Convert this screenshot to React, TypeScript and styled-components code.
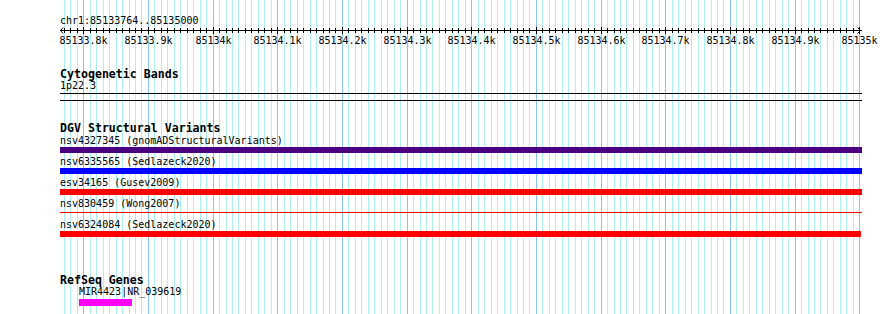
import React from 'react';
import styled, { createGlobalStyle } from 'styled-components';

const START = 85133764;
const END = 85135000;
const LEFT = 60;
const PX_PER_BP = 0.64667;
const TRACK_WIDTH = 802;

const bpToX = (bp: number) => Math.round(LEFT + (bp - START) * PX_PER_BP);

const MONO = `'DejaVu Sans Mono', 'Liberation Mono', monospace`;

const GlobalStyle = createGlobalStyle`
  html, body {
    margin: 0;
    padding: 0;
    background: #ffffff;
  }
  body {
    font-family: ${MONO};
    color: #000000;
  }
`;

const Page = styled.div`
  position: relative;
  width: 890px;
  height: 314px;
  overflow: hidden;
  background: #ffffff;
`;

const GridLayer = styled.svg`
  position: absolute;
  left: 0;
  top: 0;
  width: 890px;
  height: 314px;
  z-index: 0;
`;

const Tracks = styled.div`
  position: relative;
  z-index: 1;
  display: flex;
  flex-direction: column;
  padding-left: ${LEFT}px;
  width: ${TRACK_WIDTH}px;
`;

const ChrLabel = styled.div`
  margin-top: 15px;
  font-size: 10px;
  line-height: 12px;
  height: 12px;
  white-space: nowrap;
`;

const RulerSvg = styled.svg`
  display: block;
  width: ${TRACK_WIDTH}px;
  height: 21px;
  overflow: visible;
`;

const TrackTitle = styled.div<{ $top: number }>`
  margin-top: ${(p) => p.$top}px;
  font-size: 11.6px;
  font-weight: bold;
  line-height: 12px;
  height: 12px;
  white-space: nowrap;
`;

const FeatureLabel = styled.div<{ $indent?: number }>`
  margin-left: ${(p) => p.$indent ?? 0}px;
  font-size: 10px;
  line-height: 12px;
  height: 12px;
  white-space: nowrap;
`;

const Rule = styled.div<{ $top: number }>`
  margin-top: ${(p) => p.$top}px;
  height: 1px;
  width: ${TRACK_WIDTH}px;
  background: #000000;
`;

const VariantList = styled.div`
  display: flex;
  flex-direction: column;
  margin-top: 1px;
`;

const VariantRow = styled.div`
  display: flex;
  flex-direction: column;
  padding-bottom: 3px;
`;

const Bar = styled.div<{ $color: string; $thin?: boolean }>`
  height: ${(p) => (p.$thin ? 1 : 6)}px;
  margin: ${(p) => (p.$thin ? '2px 0 3px' : '0')};
  background: ${(p) => p.$color};
`;

const GeneBar = styled.div<{ $indent: number }>`
  margin-left: ${(p) => p.$indent}px;
  margin-top: 1px;
  height: 7px;
  background: #ff00ff;
`;

type Variant = { id: string; source: string; color: string; thin?: boolean; width: number };

const variants: Variant[] = [
  { id: 'nsv4327345', source: 'gnomADStructuralVariants', color: '#4b0082', width: 802 },
  { id: 'nsv6335565', source: 'Sedlazeck2020', color: '#0000ff', width: 802 },
  { id: 'esv34165', source: 'Gusev2009', color: '#ff0000', width: 802 },
  { id: 'nsv830459', source: 'Wong2007', color: '#ff0000', thin: true, width: 802 },
  { id: 'nsv6324084', source: 'Sedlazeck2020', color: '#ff0000', width: 801 },
];

const minorTicks: number[] = [];
for (let bp = Math.ceil(START / 10) * 10; bp <= END; bp += 10) minorTicks.push(bp);

function Grid() {
  return (
    <GridLayer viewBox="0 0 890 314" shapeRendering="crispEdges">
      {minorTicks.map((bp) => {
        const x = bpToX(bp) + 0.5;
        const major = bp % 100 === 0;
        return (
          <line
            key={bp}
            x1={x}
            x2={x}
            y1={0}
            y2={314}
            stroke={major ? '#88c5e8' : '#afeeee'}
            strokeWidth={1}
          />
        );
      })}
    </GridLayer>
  );
}

function Ruler() {
  const majors = minorTicks.filter((bp) => bp % 100 === 0);
  const label = (bp: number) => {
    const k = bp / 1000;
    return `${Number.isInteger(k) ? k : k.toFixed(1)}k`;
  };
  return (
    <RulerSvg viewBox={`0 0 ${TRACK_WIDTH} 21`} shapeRendering="crispEdges">
      <line x1={0} x2={TRACK_WIDTH} y1={3.5} y2={3.5} stroke="#000" />
      <polyline points="3,0.5 0.5,3.5 3,6.5" fill="none" stroke="#000" shapeRendering="auto" />
      <polyline points="797.5,0.5 800.5,3.5 797.5,6.5" fill="none" stroke="#000" shapeRendering="auto" />
      {minorTicks.map((bp) => {
        const x = bpToX(bp) - LEFT + 0.5;
        const major = bp % 100 === 0;
        return (
          <line key={bp} x1={x} x2={x} y1={major ? 0 : 1} y2={major ? 7 : 6} stroke="#000" />
        );
      })}
      {majors.map((bp) => (
        <text
          key={bp}
          x={bpToX(bp) - LEFT + 0.5}
          y={17}
          textAnchor="middle"
          fontFamily="DejaVu Sans Mono, monospace"
          fontSize={10}
          fill="#000"
        >
          {label(bp)}
        </text>
      ))}
    </RulerSvg>
  );
}

export default function App() {
  return (
    <Page>
      <GlobalStyle />
      <Grid />
      <Tracks>
        <ChrLabel>chr1:85133764..85135000</ChrLabel>
        <Ruler />

        <TrackTitle $top={20}>Cytogenetic Bands</TrackTitle>
        <FeatureLabel>1p22.3</FeatureLabel>
        <Rule $top={1} />
        <Rule $top={6} />

        <TrackTitle $top={21}>DGV Structural Variants</TrackTitle>
        <VariantList>
          {variants.map((v) => (
            <VariantRow key={v.id}>
              <FeatureLabel>{`${v.id} (${v.source})`}</FeatureLabel>
              <Bar $color={v.color} $thin={v.thin} style={{ width: v.width }} />
            </VariantRow>
          ))}
        </VariantList>

        <TrackTitle $top={34}>RefSeq Genes</TrackTitle>
        <FeatureLabel $indent={19}>MIR4423|NR_039619</FeatureLabel>
        <GeneBar $indent={19} style={{ width: 53 }} />
      </Tracks>
    </Page>
  );
}
